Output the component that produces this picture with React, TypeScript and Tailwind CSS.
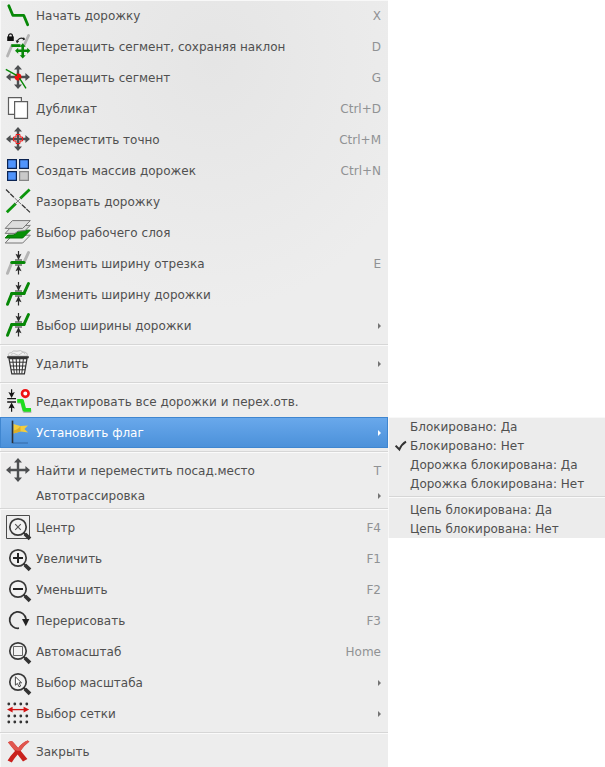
import type { ReactNode } from "react";

// ─── Icon parts ─────────────────────────────────────────────────────────────

function Icon({ children }: { children?: ReactNode }) {
  return (
    <svg viewBox="0 0 24 24" className="h-6 w-6 shrink-0 overflow-visible" fill="none" aria-hidden="true">
      {children}
    </svg>
  );
}

function MoveCross() {
  return (
    <path
      fill="#4d4f51"
      d="M12-1 16 3.6H13.2V9.8H19.4V7L24 11 19.4 15V12.2H13.2V18.4H16L12 23 8 18.4H10.8V12.2H4.6V15L0 11 4.6 7V9.8H10.8V3.6H8Z"
    />
  );
}

function Lens({ children }: { children?: ReactNode }) {
  return (
    <>
      <circle cx="12" cy="11" r="8.2" fill="#f2f2f2" stroke="#3a3a3a" strokeWidth="1.7" />
      <path d="M17.5 16.5 20 19" stroke="#333" strokeWidth="2" />
      <path d="M19 18 24 22.8" stroke="#333" strokeWidth="3.8" />
      {children}
    </>
  );
}

function TrackWidth({ ends }: { ends: string }) {
  return (
    <>
      <path d="M22.5.5 18 10.4M5.8 10.5 1.5 21.3" stroke={ends} strokeWidth="3" strokeLinecap="round" />
      <path d="M9 8H16M9 13H16" stroke="#2b2b2b" />
      <path d="M12.5-1V4M12.5 22.5V16" stroke="#2b2b2b" strokeWidth="1.2" />
      <path d="M9.5 1.8 12.5 3 15.5 1.8 12.5 8ZM9.5 19.2 12.5 18 15.5 19.2 12.5 13Z" fill="#2b2b2b" />
      <path d="M5.8 10.5H18" stroke="#078807" strokeWidth="3" strokeLinecap="round" />
    </>
  );
}

const icons = {
  track: (
    <path d="M2.8 1.8 6.8 11.3H17.7L21.7 20.8" stroke="#078807" strokeWidth="2.8" strokeLinecap="round" strokeLinejoin="round" />
  ),
  dragSlope: (
    <>
      <path d="M22.6.5 18 10.5M5.8 10.8 1.5 21" stroke="#b4b4b4" strokeWidth="2.8" strokeLinecap="round" />
      <path d="M5.3 10.6H14.5" stroke="#078807" strokeWidth="2.8" />
      <path
        fill="#078807"
        d="M16.7 8.3 19.7 11.7H18V14.5H21.2V12.8L24.4 15.8 21.2 18.8V17.1H18V20.2H19.7L16.7 23.4 13.7 20.2H15.4V17.1H12.2V18.8L9 15.8 12.2 12.8V14.5H15.4V11.7H13.7Z"
      />
      <path d="M1.2 1.4H7.8V6H1.2Z" fill="#111" />
      <path d="M2.6 2V.7A1.9 1.9 0 0 1 6.4.7V2" stroke="#111" strokeWidth="1.2" />
      <path d="M11 6.8Q13 1.5 18 3.8" stroke="#222" strokeWidth="1.1" />
      <path d="M9.6 5.2 11 8.4 13.2 6ZM16.6 5.6 19.2 4.6 17.8 2Z" fill="#222" />
    </>
  ),
  drag: (
    <>
      <MoveCross />
      <circle cx="12" cy="11" r="3.4" fill="#ee1212" />
      <path d="M-.2 3.3 12.3 10.3 20 22.4" stroke="#078807" strokeWidth="1.4" />
      <path d="M12 8.4V13.6M9.4 11H14.6" stroke="#ee1212" strokeWidth="2" />
    </>
  ),
  copy: (
    <g fill="#fff" stroke="#5e5e5e" strokeWidth="1.2">
      <path d="M2.5.6H15.4V17.4H2.5Z" />
      <path d="M8.6 4.6H21.5V21.4H8.6Z" />
    </g>
  ),
  moveExact: (
    <>
      <MoveCross />
      <path
        d="M10 6.5H14V9H16.5V13H14V15.5H10V13H7.5V9H10Z"
        stroke="#f01818"
        strokeWidth="1"
      />
    </>
  ),
  array: (
    <g strokeWidth="1.2">
      <path d="M1.6.6H10.4V9.4H1.6ZM13.6.6H22.4V9.4H13.6ZM1.6 12.6H10.4V21.4H1.6Z" fill="#5094fc" stroke="#0c2452" />
      <path d="M13.6 12.6H22.4V21.4H13.6Z" fill="#c9c9c9" stroke="#868686" />
    </g>
  ),
  breakTrack: (
    <>
      <path d="M.8 22.2 9.8 13.4M14.2 8.6 23.6-.4" stroke="#0a960a" strokeWidth="2.8" />
      <path d="M0-.5 8 7.4M16 14.8 24 22.4" stroke="#333" strokeWidth="1.2" strokeDasharray="5 1" />
      <path d="M8.6 8 15.4 14.4M15.4 7.6 8.6 14.4" stroke="#777" />
    </>
  ),
  layer: (
    <g stroke="#777" fill="#dedede">
      <path d="M6.4 14.2H24.3L16.7 22H-.8Z" fill="#ececec" />
      <path d="M6.4 9.2H24.3L16.7 17H-.8L2 14H8L10 11H6Z" fill="#079007" stroke="#067306" />
      <path d="M6.4 4.4H24.3L19 9.6 12 10.2 9 12.4H-.8Z" />
      <path d="M6.4-.4H24.3L16.7 7.4H-.8Z" />
    </g>
  ),
  widthSegment: <TrackWidth ends="#b4b4b4" />,
  width: <TrackWidth ends="#078807" />,
  trash: (
    <>
      <path d="M2.6 4Q1.4 1 5.4.6 7-2 11-.8 15-2.4 17 0 22 0 21.2 4Z" fill="#f1f1f1" stroke="#b5b5b5" strokeWidth=".8" />
      <path d="M5 2.4Q8 .2 10 2.4T15 1.6 19 2.4" stroke="#bbb" strokeWidth=".8" />
      <path d="M1.2 5.2H22.8" stroke="#333" strokeWidth="2" />
      <path d="M3 6.6H21L18.4 21.8H5.8Z" fill="#f8f8f8" stroke="#333" strokeWidth="1.2" />
      <path d="M6.6 6.6 8.4 21.6M10.2 6.6 10.9 21.6M13.8 6.6 13.3 21.6M17.4 6.6 15.8 21.6M3.6 10.2H20.4M4.4 14H19.8M5 17.8H19.2" stroke="#333" />
    </>
  ),
  editAll: (
    <>
      <path d="M1.2 8.6H10M1.2 12H10" stroke="#151515" strokeWidth="1.3" />
      <path d="M5.6-.8V4M5.6 21.8V16" stroke="#151515" strokeWidth="1.2" />
      <path d="M2.4 2 5.6 3.2 8.8 2 5.6 8ZM2.4 18.6 5.6 17.4 8.8 18.6 5.6 12.6Z" fill="#151515" />
      <path d="M11.6 12H16L18.4 21.2H25.4" stroke="#b8b8b8" strokeWidth="3.6" strokeLinejoin="round" />
      <path d="M11.2 10.8H16L18.4 19.8H25" stroke="#1fdd1f" strokeWidth="3.8" strokeLinejoin="round" />
      <circle cx="19.3" cy="3.6" r="3.3" fill="#fff" stroke="#ee1212" strokeWidth="2.6" />
    </>
  ),
  flag: (
    <>
      <path d="M7 22H22" stroke="#3568a5" />
      <path d="M7.4 3 14.4 5 22 4.4 18.4 8 22.2 11.4 14.6 10.4 7.4 12.6Z" fill="#f2cc3e" />
      <path d="M14.4 5 14.6 10.4 7.4 12.6V9.4Q12 9 14.4 5Z" fill="#dcae28" />
      <path d="M6.5-.4V22.2" stroke="#2b3038" strokeWidth="1.6" />
    </>
  ),
  move: <MoveCross />,
  center: (
    <>
      <path d="M.5-.5H23.5V22.5H.5Z" stroke="#4a4a4a" />
      <Lens>
        <path d="M9.2 8.2 14.8 13.8M14.8 8.2 9.2 13.8" stroke="#555" strokeWidth="1.1" />
      </Lens>
    </>
  ),
  zoomIn: (
    <Lens>
      <path d="M12 6V16M7 11H17" stroke="#222" strokeWidth="2" />
    </Lens>
  ),
  zoomOut: (
    <Lens>
      <path d="M7 11H17" stroke="#222" strokeWidth="2" />
    </Lens>
  ),
  redraw: (
    <>
      <path d="M13 19.2A8.2 8.2 0 1 1 20 10" stroke="#333" strokeWidth="1.7" />
      <path d="M16 10H23.4L19.8 17.2Z" fill="#222" />
    </>
  ),
  zoomFit: (
    <Lens>
      <path d="M7.5 6.5H16.5V15.5H7.5Z" stroke="#666" />
    </Lens>
  ),
  zoomSelect: (
    <Lens>
      <path d="M9.4 5.8V14.2L11.4 12.4 13 15.8 14.6 15 13 11.8H15.6Z" fill="#fff" stroke="#333" strokeWidth=".9" />
    </Lens>
  ),
  grid: (
    <>
      <path d="M2.8 2H22M2.8 14H22M2.8 20H22" stroke="#333" strokeWidth="2.8" strokeLinecap="round" strokeDasharray="0 6" />
      <path d="M4 7.6H20" stroke="#d31212" strokeWidth="1.3" />
      <path d="M1 7.6 6.6 4.8V10.4ZM23.2 7.6 17.6 4.8V10.4Z" fill="#d31212" />
    </>
  ),
  close: (
    <>
      <path
        d="M2 2.2Q6 .4 7.4 2.4L12.2 8Q16 2.4 21.6.4L23.4 1.6Q18 5.6 14.6 10.8L21.4 19 17 21.6 11.6 14.4Q8 18.6 5.8 22.4L1.6 20.4Q4.6 15.6 9 11Z"
        fill="#c9221e"
      />
      <path d="M2 2.2Q6 .4 7.4 2.4L12.2 8Q16 2.4 21.6.4L23.4 1.6Q18 5.6 14.6 10.8 8 11 6.6 8Z" fill="#e0564e" />
    </>
  ),
};

// ─── Menu data ──────────────────────────────────────────────────────────────

type Item = {
  label: string;
  icon?: keyof typeof icons;
  shortcut?: string;
  submenu?: boolean;
  active?: boolean;
};

const GROUPS: Item[][] = [
  [
    { label: "Начать дорожку", icon: "track", shortcut: "X" },
    { label: "Перетащить сегмент, сохраняя наклон", icon: "dragSlope", shortcut: "D" },
    { label: "Перетащить сегмент", icon: "drag", shortcut: "G" },
    { label: "Дубликат", icon: "copy", shortcut: "Ctrl+D" },
    { label: "Переместить точно", icon: "moveExact", shortcut: "Ctrl+M" },
    { label: "Создать массив дорожек", icon: "array", shortcut: "Ctrl+N" },
    { label: "Разорвать дорожку", icon: "breakTrack" },
    { label: "Выбор рабочего слоя", icon: "layer" },
    { label: "Изменить ширину отрезка", icon: "widthSegment", shortcut: "E" },
    { label: "Изменить ширину дорожки", icon: "width" },
    { label: "Выбор ширины дорожки", icon: "width", submenu: true },
  ],
  [{ label: "Удалить", icon: "trash", submenu: true }],
  [
    { label: "Редактировать все дорожки и перех.отв.", icon: "editAll" },
    { label: "Установить флаг", icon: "flag", submenu: true, active: true },
  ],
  [
    { label: "Найти и переместить посад.место", icon: "move", shortcut: "T" },
    { label: "Автотрассировка", submenu: true },
  ],
  [
    { label: "Центр", icon: "center", shortcut: "F4" },
    { label: "Увеличить", icon: "zoomIn", shortcut: "F1" },
    { label: "Уменьшить", icon: "zoomOut", shortcut: "F2" },
    { label: "Перерисовать", icon: "redraw", shortcut: "F3" },
    { label: "Автомасштаб", icon: "zoomFit", shortcut: "Home" },
    { label: "Выбор масштаба", icon: "zoomSelect", submenu: true },
    { label: "Выбор сетки", icon: "grid", submenu: true },
  ],
  [{ label: "Закрыть", icon: "close" }],
];

const FLAG_GROUPS = [
  [
    { label: "Блокировано: Да", checked: false },
    { label: "Блокировано: Нет", checked: true },
    { label: "Дорожка блокирована: Да", checked: false },
    { label: "Дорожка блокирована: Нет", checked: false },
  ],
  [
    { label: "Цепь блокирована: Да", checked: false },
    { label: "Цепь блокирована: Нет", checked: false },
  ],
];

// ─── Menu components ────────────────────────────────────────────────────────

function Separator() {
  return (
    <div role="separator" className="py-[3px]">
      <div className="h-px bg-[#d6d6d6] shadow-[0_1px_0_#fafafa]" />
    </div>
  );
}

function MenuItem({ item }: { item: Item }) {
  const { label, icon, shortcut, submenu, active } = item;
  return (
    <div className="relative">
      <button
        type="button"
        role="menuitem"
        aria-haspopup={submenu ? "menu" : undefined}
        aria-expanded={active}
        className={`flex w-full items-center pr-[7px] pl-[6px] text-left whitespace-nowrap ${icon ? "pt-1 pb-[3px]" : "pt-px"} ${
          active
            ? "bg-linear-to-b from-[#6aa9ec] to-[#4a90d9] text-white shadow-[inset_0_0_0_1px_#3f86d0]"
            : ""
        }`}
      >
        {icon ? <Icon>{icons[icon]}</Icon> : <span className="w-6 shrink-0" />}
        <span className="ml-[6px] flex-1">{label}</span>
        {shortcut && <span className="text-[#909294]">{shortcut}</span>}
        {submenu && (
          <svg viewBox="0 0 3 6" className={`h-[6px] w-[3px] ${active ? "text-white" : "text-[#747474]"}`} aria-hidden="true">
            <path d="M0 0 3 3 0 6Z" fill="currentColor" />
          </svg>
        )}
      </button>
      {active && <FlagMenu />}
    </div>
  );
}

function FlagMenu() {
  return (
    <div
      role="menu"
      aria-label="Установить флаг"
      className="absolute top-0 left-full w-[217px] border-l border-[#f8f8f8] bg-[#ececec] shadow-[inset_0_1px_0_#f8f8f8]"
    >
      {FLAG_GROUPS.map((group, i) => (
        <div key={i}>
          {i > 0 && <Separator />}
          {group.map(({ label, checked }) => (
            <button
              key={label}
              type="button"
              role="menuitemcheckbox"
              aria-checked={checked}
              className="flex w-full items-center pt-px pl-[6px] text-left whitespace-nowrap"
            >
              <svg viewBox="0 0 12 12" className="mr-[3px] h-3 w-3 shrink-0" fill="none" aria-hidden="true">
                {checked && <path d="M.6 5.6 4.4 9.4Q6.6 4.2 11 1.6" stroke="#333" strokeWidth="2" />}
              </svg>
              {label}
            </button>
          ))}
        </div>
      ))}
    </div>
  );
}

export default function App() {
  return (
    <div className="min-h-screen bg-white pr-[217px] font-['DejaVu_Sans',sans-serif] text-[12px] leading-[18px] text-[#505050]">
      <div
        role="menu"
        className="bg-[#ededed] bg-[radial-gradient(ellipse_220px_250px_at_55%_60px,#e5e5e5,#ededed)] shadow-[inset_1px_1px_0_#f8f8f8]"
      >
        {GROUPS.map((group, i) => (
          <div key={i}>
            {i > 0 && <Separator />}
            {group.map((item) => (
              <MenuItem key={item.label} item={item} />
            ))}
          </div>
        ))}
      </div>
    </div>
  );
}
